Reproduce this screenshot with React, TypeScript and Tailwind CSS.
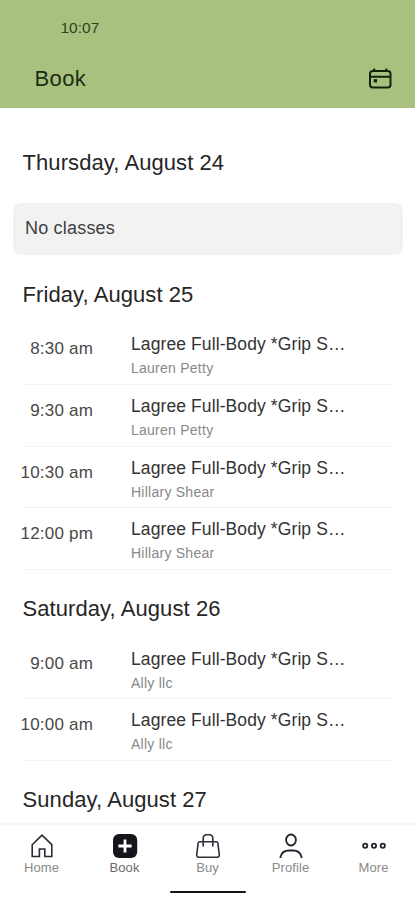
import React from 'react';
import clsx from 'clsx';

interface ClassItem {
  time: string;
  title: string;
  teacher: string;
}

const friday: ClassItem[] = [
  { time: '8:30 am', title: 'Lagree Full-Body *Grip S…', teacher: 'Lauren Petty' },
  { time: '9:30 am', title: 'Lagree Full-Body *Grip S…', teacher: 'Lauren Petty' },
  { time: '10:30 am', title: 'Lagree Full-Body *Grip S…', teacher: 'Hillary Shear' },
  { time: '12:00 pm', title: 'Lagree Full-Body *Grip S…', teacher: 'Hillary Shear' },
];

const saturday: ClassItem[] = [
  { time: '9:00 am', title: 'Lagree Full-Body *Grip S…', teacher: 'Ally llc' },
  { time: '10:00 am', title: 'Lagree Full-Body *Grip S…', teacher: 'Ally llc' },
];

const DayHeading: React.FC<{ children: React.ReactNode; className?: string }> = ({ children, className }) => (
  <h2 className={clsx('pl-[22.5px] text-[22px] leading-7 tracking-[0.08px] text-[#262626]', className)}>{children}</h2>
);

const ClassRow: React.FC<{ item: ClassItem }> = ({ item }) => (
  <li className="ml-[23px] mr-[23px] flex h-[61.8px] border-b border-[#f3f3f3]">
    <div className="-ml-[13px] w-[83px] shrink-0 pt-[14px] text-right text-[17px] leading-6 tracking-[0.2px] text-[#484848]">
      {item.time}
    </div>
    <div className="pl-[38px] pt-[9px]">
      <p className="whitespace-nowrap text-[17.5px] leading-6 tracking-[0.1px] text-[#333]">{item.title}</p>
      <p className="mt-[2px] text-[14px] leading-5 tracking-[0.25px] text-[#888]">{item.teacher}</p>
    </div>
  </li>
);

const CalendarIcon = () => (
  <svg width="24" height="22" viewBox="0 0 24 22" fill="none" stroke="#16200f" strokeWidth="2">
    <rect x="2" y="3" width="20.5" height="16.5" rx="2.8" />
    <path d="M2 8.8h20.5M6.2 0.5v3.5M18.2 0.5v3.5" />
    <rect x="5.7" y="11.2" width="3.4" height="3.2" fill="#16200f" stroke="none" />
  </svg>
);

const HomeIcon = () => (
  <svg width="24" height="26" viewBox="0 0 24 26" fill="none" stroke="#2b2b38" strokeWidth="1.6">
    <path d="M2.2 11.7 12 2.2 21.8 11.7V23.5H14.8V16H9.4V23.5H2.2Z" />
  </svg>
);

const BookIcon = () => (
  <svg width="26" height="26" viewBox="0 0 26 26" fill="none">
    <rect x="1" y="1" width="24.2" height="24" rx="6" fill="#15151b" />
    <path d="M13 6.4v13.2M6.4 13h13.2" stroke="#fff" strokeWidth="2.8" />
  </svg>
);

const BuyIcon = () => (
  <svg width="26" height="26" viewBox="0 0 26 26" fill="none" stroke="#30303a" strokeWidth="1.6">
    <path d="M4.4 8.8h17.2q1 0 1.2 1l1.5 11.6q.2 2.8-2.3 2.8H4q-2.5 0-2.3-2.8L3.2 9.8q.2-1 1.2-1Z" />
    <path d="M8.2 13.5V5.5Q8.2 1.8 11.5 1.8h3Q17.8 1.8 17.8 5.5v8" />
  </svg>
);

const ProfileIcon = () => (
  <svg width="26" height="26" viewBox="0 0 26 26" fill="none" stroke="#23232f" strokeWidth="1.8">
    <ellipse cx="13" cy="7" rx="4.9" ry="5.5" />
    <path d="M2.5 25V23.8Q4 17.5 11 17.5h4Q22 17.5 23.5 23.8V25" />
  </svg>
);

const MoreIcon = () => (
  <svg width="26" height="26" viewBox="0 0 26 26" fill="none" stroke="#23232f" strokeWidth="1.8">
    <circle cx="4.2" cy="12.8" r="2.1" />
    <circle cx="13" cy="12.8" r="2.1" />
    <circle cx="21.8" cy="12.8" r="2.1" />
  </svg>
);

const tabs = [
  { label: 'Home', icon: <HomeIcon /> },
  { label: 'Book', icon: <BookIcon />, active: true },
  { label: 'Buy', icon: <BuyIcon /> },
  { label: 'Profile', icon: <ProfileIcon /> },
  { label: 'More', icon: <MoreIcon /> },
];

export default function App() {
  return (
    <div className="flex h-[900px] w-[415px] flex-col overflow-hidden bg-white font-['Liberation_Sans',Arial,sans-serif]">
      <header className="h-[108px] shrink-0 bg-[#a9c17f]">
        <div className="pl-[60.5px] pt-[18px] text-[15.5px] leading-5 text-[#33421f]">10:07</div>
        <div className="flex items-center justify-between pl-[34.5px] pr-[23px] pt-[27px]">
          <h1 className="text-[22px] leading-7 tracking-[0.4px] text-[#202b14]">Book</h1>
          <CalendarIcon />
        </div>
      </header>

      <main className="min-h-0 flex-1 overflow-hidden">
        <DayHeading className="pt-[41px]">Thursday, August 24</DayHeading>
        <div className="ml-[13px] mr-3 mt-[26px] flex h-[52px] items-center rounded-lg bg-[#f2f2f2] pb-px pl-3 text-[18px] tracking-[0.2px] text-[#404040]">
          No classes
        </div>
        <DayHeading className="pt-[26px]">Friday, August 25</DayHeading>
        <ul className="pt-[14px]">
          {friday.map((item) => (
            <ClassRow key={item.time} item={item} />
          ))}
        </ul>
        <DayHeading className="pt-[25px]">Saturday, August 26</DayHeading>
        <ul className="pt-[14.4px]">
          {saturday.map((item) => (
            <ClassRow key={item.time} item={item} />
          ))}
        </ul>
        <DayHeading className="pt-[25px]">Sunday, August 27</DayHeading>
      </main>

      <nav className="h-[77px] shrink-0 border-t-2 border-[#f7f7f7] bg-white">
        <ul className="grid grid-cols-5 pt-2">
          {tabs.map((tab) => (
            <li key={tab.label} className="flex flex-col items-center">
              {tab.icon}
              <span
                className={clsx(
                  'text-[13px] leading-[18px] tracking-[0.1px]',
                  tab.active ? 'text-[#6a6a6a]' : 'text-[#8a8a8a]'
                )}
              >
                {tab.label}
              </span>
            </li>
          ))}
        </ul>
        <div className="mx-auto mt-[14px] h-[2px] w-[76px] rounded-full bg-[#15151b]" />
      </nav>
    </div>
  );
}
